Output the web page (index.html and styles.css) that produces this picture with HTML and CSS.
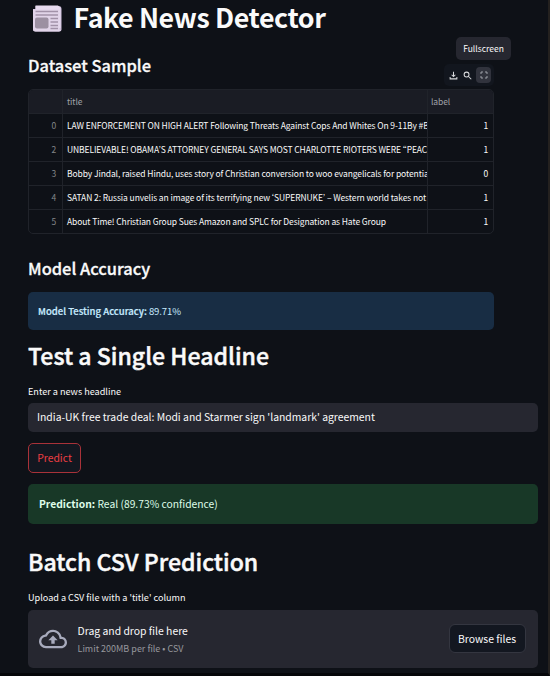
FILE: index.html
```html
<!DOCTYPE html>
<html lang="en">
<head>
<meta charset="utf-8">
<title>Fake News Detector</title>
<link rel="stylesheet" href="styles.css">
</head>
<body>
<main class="app">
  <h1 class="title">
    <svg class="news" viewBox="0 0 30 27" aria-hidden="true">
      <path d="M3 1H26Q29 1 29 4V24Q29 26.500 26.500 26.500H3Q.5 26.500.5 24V4L3 4Z" fill="#cdbfda"/>
      <path d="M3 .5H25.500L28 3V23H3Z" fill="#e7dbef"/>
      <path d="M.5 4.500H27V23.500Q27 26 29 24.500Q28.500 26.500 26.500 26.500H3Q.5 26.500.5 24Z" fill="#e1d4e9"/>
      <path d="M3 6.500H25.500M3 10H25.500M18 13.500H25.500M18 17H25.500M18 20.500H25.500M18 23.500H25.500" stroke="#a292a9" stroke-width="1.300"/>
      <rect x="2.500" y="12.500" width="13.500" height="11" rx="2" fill="#9c90a2"/>
    </svg>
    <span>Fake News Detector</span>
  </h1>
  <section class="dataset">
    <h2 class="sub">Dataset Sample</h2>
    <div class="tools">
      <svg viewBox="0 0 24 24"><path d="M12 2V14M7 10L12 15L17 10M3 16V21H21V16"/></svg>
      <svg viewBox="0 0 24 24"><circle cx="9.500" cy="9.500" r="6.500"/><path d="M14 14L22 22"/></svg>
      <span class="active"><svg viewBox="0 0 24 24"><path d="M3 9V3H9M15 3H21V9M21 15V21H15M9 21H3V15"/></svg></span>
    </div>
    <div class="tooltip">Fullscreen</div>
  </section>
  <div class="grid">
    <div class="row head"><span></span><span>title</span><span>label</span></div>
    <div class="row"><span>0</span><span>LAW ENFORCEMENT ON HIGH ALERT Following Threats Against Cops And Whites On 9-11By #B</span><span>1</span></div>
    <div class="row"><span>2</span><span>UNBELIEVABLE! OBAMA’S ATTORNEY GENERAL SAYS MOST CHARLOTTE RIOTERS WERE “PEAC</span><span>1</span></div>
    <div class="row"><span>3</span><span>Bobby Jindal, raised Hindu, uses story of Christian conversion to woo evangelicals for potential</span><span>0</span></div>
    <div class="row"><span>4</span><span>SATAN 2: Russia unvelis an image of its terrifying new ‘SUPERNUKE’ – Western world takes not</span><span>1</span></div>
    <div class="row"><span>5</span><span>About Time! Christian Group Sues Amazon and SPLC for Designation as Hate Group</span><span>1</span></div>
  </div>
  <h2 class="sub accuracy">Model Accuracy</h2>
  <div class="info"><b>Model Testing Accuracy:</b> 89.71%</div>
  <h1 class="section">Test a Single Headline</h1>
  <label class="label">Enter a news headline</label>
  <div class="input">India-UK free trade deal: Modi and Starmer sign 'landmark' agreement</div>
  <button class="predict">Predict</button>
  <div class="success"><b>Prediction:</b> Real (89.73% confidence)</div>
  <h1 class="section batch">Batch CSV Prediction</h1>
  <div class="label upload">Upload a CSV file with a 'title' column</div>
  <div class="drop">
    <svg class="cloud" viewBox="0 0 24 24"><path d="M19.350 10.040A7.490 7.490 0 0 0 12 4C9.110 4 6.600 5.640 5.350 8.040A5.994 5.994 0 0 0 0 14c0 3.310 2.690 6 6 6h13c2.760 0 5-2.240 5-5 0-2.640-2.050-4.780-4.650-4.960zM19 18H6c-2.210 0-4-1.790-4-4 0-2.050 1.530-3.760 3.560-3.970l1.070-.110.5-.950A5.469 5.469 0 0 1 12 6c2.620 0 4.880 1.860 5.390 4.430l.3 1.500 1.530.110A2.980 2.980 0 0 1 22 15c0 1.650-1.350 3-3 3zM8 13h2.550v3h2.900v-3H16l-4-4z"/></svg>
    <div class="copy"><span class="main">Drag and drop file here</span><span class="hint">Limit 200MB per file • CSV</span></div>
    <button class="browse">Browse files</button>
  </div>
</main>
</body>
</html>
```

FILE: styles.css
```css
* { box-sizing: border-box; }
html { background: #0e1117; }
body {
  margin: 0;
  height: 676px;
  overflow: hidden;
  background: #0e1117;
  border-right: 2px solid #24211f;
  border-bottom: 3px solid #050609;
  color: #fafafa;
  font-family: "Noto Sans CJK KR", "Noto Sans", sans-serif;
}
.app { width: 509.500px; margin-left: 28px; display: flex; flex-direction: column; align-items: stretch; }
h1, h2 { margin: 0; white-space: nowrap; }
button { font-family: inherit; padding: 0; white-space: nowrap; }
.title { height: 36px; display: flex; align-items: center; gap: 10.500px; padding-left: 4px; font-size: 26.800px; line-height: 36px; font-weight: 700; letter-spacing: -.4px; }
.title span { padding-bottom: 3px; }
.news { width: 31px; height: 27px; }
.dataset { position: relative; width: 466px; height: 52.500px; display: flex; justify-content: space-between; }
.sub { font-size: 16.450px; line-height: 24px; font-weight: 500; -webkit-text-stroke: .3px #fafafa; }
.dataset .sub { margin-top: 17px; }
.tools { margin-top: 28px; height: 22px; width: 50px; padding: 0 3px 0 5px; border-radius: 5px; background: #12161e; display: flex; align-items: center; justify-content: space-between; }
.tools svg { width: 9px; height: 9px; fill: none; stroke: #d8d9dc; stroke-width: 2.700; }
.active { width: 15px; height: 16px; border-radius: 4px; background: #31333d; display: grid; place-items: center; }
.tools .active svg { width: 8px; height: 8px; stroke: #a9abb3; }
.tooltip { position: absolute; left: 428px; top: 1px; width: 55px; height: 23px; border-radius: 5px; background: #262730; display: grid; place-items: center; font-size: 8.500px; line-height: 14px; padding-bottom: 1px; }
.grid { width: 466px; height: 145px; border: 1px solid #20232a; border-radius: 5px; overflow: hidden; font-size: 8.500px; letter-spacing: -.1px; }
.row { display: grid; grid-template-columns: 33px 365px 1fr; height: 24px; line-height: 22px; border-bottom: 1px solid #20232a; }
.row:last-child { border-bottom: 0; }
.row span { overflow: hidden; white-space: nowrap; padding-left: 4px; }
.row span + span { border-left: 1px solid #20232a; }
.row > span:first-child { padding: 0 6px 0 0; text-align: right; color: #848689; }
.row > span:last-child { text-align: right; padding-right: 5px; }
.row.head { background: #1a1c24; color: #a0a2a8; }
.row.head > span:last-child { text-align: left; padding-left: 3px; }
.accuracy { margin-top: 22.500px; height: 35.500px; }
.info { width: 466px; height: 38px; border-radius: 5px; background: #182d44; color: #c7ebff; padding-left: 10px; font-size: 9.550px; letter-spacing: -.1px; line-height: 38px; }
.info b { font-weight: 500; -webkit-text-stroke: .2px #c7ebff; letter-spacing: 0; }
.section { font-size: 23.100px; line-height: 34px; font-weight: 500; -webkit-text-stroke: .45px #fafafa; margin-top: 8px; height: 44px; }
.label { font-size: 9.100px; line-height: 13px; height: 18.500px; margin-top: 3px; }
.input { height: 29px; border-radius: 5px; background: #262730; padding-left: 9px; font-size: 10.380px; line-height: 28px; }
.predict { width: 53px; height: 30px; margin-top: 11px; border: 1px solid #a93239; border-radius: 5px; background: #131720; color: #ed3e43; font-size: 10.400px; line-height: 26px; }
.success { height: 40px; margin-top: 11px; border-radius: 5px; background: #183827; color: #dffde9; padding-left: 11px; font-size: 10.300px; line-height: 40px; }
.batch { margin-top: 20px; }
.upload { margin-top: 3px; height: 18.500px; line-height: 13px; }
.drop { height: 58px; border-radius: 5px; background: #262730; display: flex; align-items: center; padding: 0 12px 0 11px; }
.cloud { width: 28px; height: 28px; fill: #a8abbd; }
.copy { display: flex; flex-direction: column; align-items: flex-start; margin: 2px 0 0 10.500px; flex: 1; }
.main { font-size: 10.400px; line-height: 18px; }
.hint { font-size: 9px; line-height: 18px; color: #96979d; }
.browse { width: 77px; height: 29px; border: 1px solid #343640; border-radius: 6px; background: #131720; color: #fafafa; font-size: 10.400px; line-height: 26px; }
```
